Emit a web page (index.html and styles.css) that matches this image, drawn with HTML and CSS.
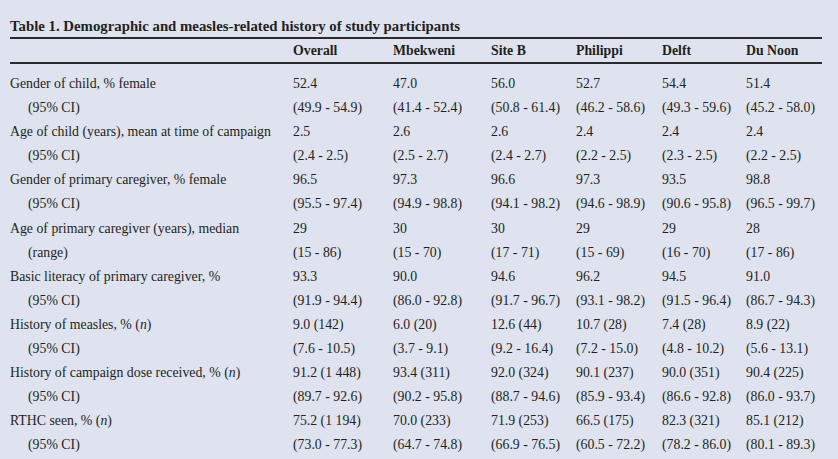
FILE: index.html
```html
<!DOCTYPE html>
<html>
<head>
<meta charset="utf-8">
<link rel="stylesheet" href="styles.css">
</head>
<body>
<div class="page">
  <div class="caption">Table 1. Demographic and measles-related history of study participants</div>
  <table class="data">
    <colgroup>
      <col class="c-label"><col class="c1"><col class="c2"><col class="c3"><col class="c4"><col class="c5"><col class="c6">
    </colgroup>
    <thead>
      <tr><th></th><th>Overall</th><th>Mbekweni</th><th>Site B</th><th>Philippi</th><th>Delft</th><th>Du Noon</th></tr>
    </thead>
    <tbody>
      <tr class="first"><td>Gender of child, % female</td><td>52.4</td><td>47.0</td><td>56.0</td><td>52.7</td><td>54.4</td><td>51.4</td></tr>
      <tr><td class="sub">(95% CI)</td><td>(49.9 - 54.9)</td><td>(41.4 - 52.4)</td><td>(50.8 - 61.4)</td><td>(46.2 - 58.6)</td><td>(49.3 - 59.6)</td><td>(45.2 - 58.0)</td></tr>
      <tr><td>Age of child (years), mean at time of campaign</td><td>2.5</td><td>2.6</td><td>2.6</td><td>2.4</td><td>2.4</td><td>2.4</td></tr>
      <tr><td class="sub">(95% CI)</td><td>(2.4 - 2.5)</td><td>(2.5 - 2.7)</td><td>(2.4 - 2.7)</td><td>(2.2 - 2.5)</td><td>(2.3 - 2.5)</td><td>(2.2 - 2.5)</td></tr>
      <tr><td>Gender of primary caregiver, % female</td><td>96.5</td><td>97.3</td><td>96.6</td><td>97.3</td><td>93.5</td><td>98.8</td></tr>
      <tr><td class="sub">(95% CI)</td><td>(95.5 - 97.4)</td><td>(94.9 - 98.8)</td><td>(94.1 - 98.2)</td><td>(94.6 - 98.9)</td><td>(90.6 - 95.8)</td><td>(96.5 - 99.7)</td></tr>
      <tr><td>Age of primary caregiver (years), median</td><td>29</td><td>30</td><td>30</td><td>29</td><td>29</td><td>28</td></tr>
      <tr><td class="sub">(range)</td><td>(15 - 86)</td><td>(15 - 70)</td><td>(17 - 71)</td><td>(15 - 69)</td><td>(16 - 70)</td><td>(17 - 86)</td></tr>
      <tr><td>Basic literacy of primary caregiver, %</td><td>93.3</td><td>90.0</td><td>94.6</td><td>96.2</td><td>94.5</td><td>91.0</td></tr>
      <tr><td class="sub">(95% CI)</td><td>(91.9 - 94.4)</td><td>(86.0 - 92.8)</td><td>(91.7 - 96.7)</td><td>(93.1 - 98.2)</td><td>(91.5 - 96.4)</td><td>(86.7 - 94.3)</td></tr>
      <tr><td>History of measles, % (<i>n</i>)</td><td>9.0 (142)</td><td>6.0 (20)</td><td>12.6 (44)</td><td>10.7 (28)</td><td>7.4 (28)</td><td>8.9 (22)</td></tr>
      <tr><td class="sub">(95% CI)</td><td>(7.6 - 10.5)</td><td>(3.7 - 9.1)</td><td>(9.2 - 16.4)</td><td>(7.2 - 15.0)</td><td>(4.8 - 10.2)</td><td>(5.6 - 13.1)</td></tr>
      <tr><td>History of campaign dose received, % (<i>n</i>)</td><td>91.2 (1 448)</td><td>93.4 (311)</td><td>92.0 (324)</td><td>90.1 (237)</td><td>90.0 (351)</td><td>90.4 (225)</td></tr>
      <tr><td class="sub">(95% CI)</td><td>(89.7 - 92.6)</td><td>(90.2 - 95.8)</td><td>(88.7 - 94.6)</td><td>(85.9 - 93.4)</td><td>(86.6 - 92.8)</td><td>(86.0 - 93.7)</td></tr>
      <tr><td>RTHC seen, % (<i>n</i>)</td><td>75.2 (1 194)</td><td>70.0 (233)</td><td>71.9 (253)</td><td>66.5 (175)</td><td>82.3 (321)</td><td>85.1 (212)</td></tr>
      <tr><td class="sub">(95% CI)</td><td>(73.0 - 77.3)</td><td>(64.7 - 74.8)</td><td>(66.9 - 76.5)</td><td>(60.5 - 72.2)</td><td>(78.2 - 86.0)</td><td>(80.1 - 89.3)</td></tr>
    </tbody>
  </table>
</div>
</body>
</html>
```
FILE: styles.css
```css
html, body {
  margin: 0;
  padding: 0;
  background: #dee3ef;
}
body {
  width: 838px;
  height: 459px;
  overflow: hidden;
  font-family: "Liberation Serif", "Times New Roman", serif;
  color: #231f20;
}
.page {
  padding: 16px 16px 0 10px;
}
.caption {
  font-weight: bold;
  font-size: 14.8px;
  line-height: 20px;
  padding-bottom: 1px;
  border-bottom: 2px solid #2b2b2b;
  white-space: nowrap;
}
.data {
  width: 812px;
  border-collapse: collapse;
  table-layout: fixed;
  font-size: 13.8px;
}
.c-label { width: 283px; }
.c1 { width: 100px; }
.c2 { width: 98px; }
.c3 { width: 85px; }
.c4 { width: 86px; }
.c5 { width: 84px; }
.c6 { width: 76px; }
.data th {
  font-weight: bold;
  text-align: left;
  height: 23px;
  padding: 0;
  border-bottom: 2px solid #2b2b2b;
}
.data td {
  height: 24.1px;
  padding: 0;
  white-space: nowrap;
  line-height: 24.1px;
}
.data tr.first td {
  padding-top: 8px;
}
.data td.sub {
  padding-left: 18px;
}
```
